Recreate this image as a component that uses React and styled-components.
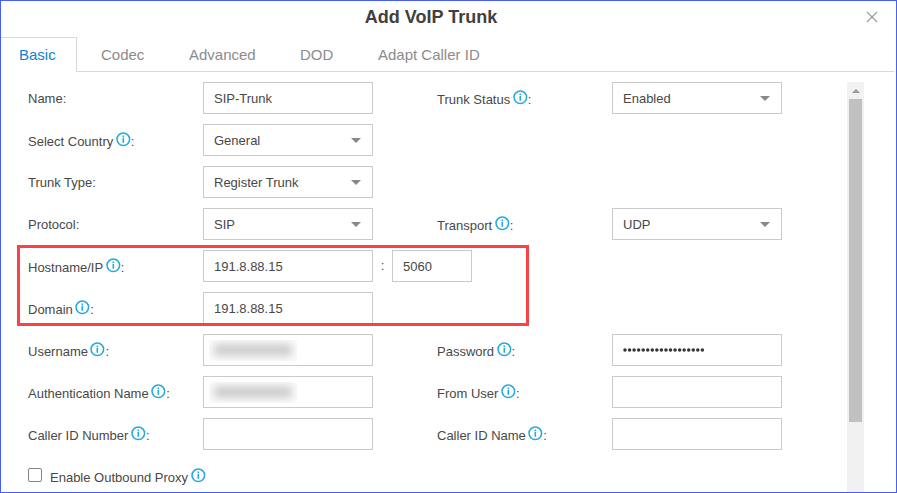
import React from "react";
import styled, { createGlobalStyle } from "styled-components";

const GlobalStyle = createGlobalStyle`
  * { box-sizing: border-box; }
  body { margin: 0; background: #fff; overflow: hidden; }
`;

const Dialog = styled.div`
  width: 897px;
  height: 493px;
  border: 1px solid #465ff5;
  background: #fff;
  display: flex;
  flex-direction: column;
  overflow: hidden;
  font-family: "Liberation Sans", Arial, sans-serif;
  font-size: 13px;
  color: #484848;
`;

const Header = styled.header`
  flex: none;
  height: 36px;
  display: grid;
  grid-template-columns: 60px 1fr 60px;
  padding-right: 35px;
`;

const Title = styled.h1`
  margin: 0;
  grid-column: 2;
  text-align: center;
  font-size: 18px;
  line-height: 32px;
  color: #404040;
`;

const CloseButton = styled.button`
  width: 12px;
  height: 12px;
  margin: 10px -17px 0 0;
  justify-self: end;
  padding: 0;
  border: 0;
  background: none;
  display: flex;
`;

const Tabs = styled.nav`
  flex: none;
  height: 35px;
  width: 893px;
  display: flex;
`;

const Tab = styled.div`
  width: ${(p) => p.$width}px;
  flex: ${(p) => (p.$last ? "1" : "none")};
  padding-left: ${(p) => p.$pad}px;
  font-size: 15px;
  line-height: 34px;
  color: ${(p) => (p.$active ? "#0d82cf" : "#8c8c8c")};
  border-style: solid;
  border-color: #d9d9d9;
  border-width: ${(p) => (p.$active ? "1px 1px 0 0" : "0 0 1px 0")};
  padding-top: ${(p) => (p.$active ? 0 : 1)}px;
`;

const Body = styled.div`
  flex: 1;
  min-height: 0;
  display: flex;
  justify-content: space-between;
  padding: 10px 32px 0 27px;
`;

const Form = styled.form`
  position: relative;
  display: flex;
  flex-direction: column;
  gap: 10px;
`;

const Row = styled.div`
  display: grid;
  grid-template-columns: 175px 234px 175px 170px;
  height: 32px;
  flex: none;
`;

const Label = styled.label`
  display: flex;
  line-height: 16px;
  padding-top: ${(p) => (p.$info ? 10 : 9)}px;
  white-space: pre;
`;

const InfoSvg = styled.svg`
  flex: none;
  width: 15px;
  height: 15px;
  margin: -2px 0 0 2.5px;
`;

const FieldGroup = styled.div`
  display: flex;
`;

const Field = styled.div`
  flex: none;
  width: ${(p) => p.$width ?? 170}px;
  height: 32px;
  border: 1px solid #cbcbcb;
  padding: 0 11px 0 10px;
  display: flex;
  align-items: center;
  justify-content: space-between;
  white-space: nowrap;
`;

const Value = styled.span`
  line-height: 16px;
  padding-top: 2px;
`;

const Caret = styled.span`
  border: 5px solid transparent;
  border-top-color: #888;
  border-bottom: 0;
`;

const Separator = styled.span`
  flex: none;
  width: 19px;
  text-align: center;
  line-height: 32px;
`;

const Redacted = styled.span`
  width: 88px;
  height: 21px;
  margin-left: -5px;
  background: #fcfcfc;
  display: flex;
  align-items: center;
  justify-content: center;
  overflow: hidden;

  &::before {
    content: "";
    width: 78px;
    height: 12px;
    background: #cbcbcb;
    filter: blur(4.5px);
  }
`;

const DotsSvg = styled.svg`
  width: 82px;
  height: 4px;
`;

const Highlight = styled.div`
  position: absolute;
  left: -11px;
  top: 163px;
  width: 512px;
  height: 81px;
  border: 3px solid #fa4145;
  pointer-events: none;
`;

const CheckRow = styled.label`
  display: flex;
  flex: none;
  height: 26px;
  line-height: 16px;
  padding-top: 10px;
`;

const Checkbox = styled.span`
  width: 14px;
  height: 14px;
  margin: -2px 8px 0 0;
  border: 1px solid #858585;
  border-radius: 2px;
`;

const ScrollTrack = styled.div`
  width: 17px;
  background: #f1f1f1;
  display: flex;
  flex-direction: column;
  align-items: center;
`;

const ScrollArrow = styled.span`
  margin: 7px 0 6px;
  border: 4px solid transparent;
  border-bottom-color: #999;
  border-top: 0;
`;

const ScrollThumb = styled.div`
  width: 13px;
  height: 323px;
  background: #c1c1c1;
`;

const Info = () => (
  <InfoSvg viewBox="0 0 15 15">
    <circle cx="7.3" cy="7.3" r="6.3" fill="none" stroke="#25a9da" strokeWidth="1.5" />
    <path d="M7.3 3.6v1.4M7.3 5.8v5" stroke="#25a9da" strokeWidth="1.6" />
  </InfoSvg>
);

const Control = ({ type, value }) => (
  <Field>
    {type === "redacted" && <Redacted />}
    {type === "password" && (
      <DotsSvg viewBox="0 0 82 4">
        {Array.from({ length: 18 }, (_, i) => (
          <circle key={i} cx={2 + i * 4.55} cy="2" r="1.75" fill="#333" />
        ))}
      </DotsSvg>
    )}
    {value && <Value>{value}</Value>}
    {type === "select" && <Caret />}
  </Field>
);

const FieldLabel = ({ text, info }) => (
  <Label $info={info}>
    {text}
    {info && <Info />}:
  </Label>
);

const rows = [
  [{ text: "Name", value: "SIP-Trunk" }, { text: "Trunk Status", info: true, type: "select", value: "Enabled" }],
  [{ text: "Select Country", info: true, type: "select", value: "General" }],
  [{ text: "Trunk Type", type: "select", value: "Register Trunk" }],
  [{ text: "Protocol", type: "select", value: "SIP" }, { text: "Transport", info: true, type: "select", value: "UDP" }],
  [{ text: "Hostname/IP", info: true, value: "191.8.88.15", port: "5060" }],
  [{ text: "Domain", info: true, value: "191.8.88.15" }],
  [{ text: "Username", info: true, type: "redacted" }, { text: "Password", info: true, type: "password" }],
  [{ text: "Authentication Name", info: true, type: "redacted" }, { text: "From User", info: true }],
  [{ text: "Caller ID Number", info: true }, { text: "Caller ID Name", info: true }],
];

const tabs = [
  { text: "Basic", width: 76, pad: 18, active: true },
  { text: "Codec", width: 88, pad: 24 },
  { text: "Advanced", width: 111, pad: 24 },
  { text: "DOD", width: 78, pad: 24 },
  { text: "Adapt Caller ID", width: 540, pad: 24, last: true },
];

export default function App() {
  return (
    <>
      <GlobalStyle />
      <Dialog>
        <Header>
          <Title>Add VoIP Trunk</Title>
          <CloseButton aria-label="Close">
            <svg width="12" height="12" viewBox="0 0 12 12">
              <path d="M1 1L11 11M11 1L1 11" stroke="#999" strokeWidth="1.1" />
            </svg>
          </CloseButton>
        </Header>
        <Tabs>
          {tabs.map((t) => (
            <Tab key={t.text} $width={t.width} $pad={t.pad} $active={t.active} $last={t.last}>
              {t.text}
            </Tab>
          ))}
        </Tabs>
        <Body>
          <Form>
            {rows.map((row) => (
              <Row key={row[0].text}>
                {row.map((f) => (
                  <React.Fragment key={f.text}>
                    <FieldLabel text={f.text} info={f.info} />
                    <FieldGroup>
                      <Control type={f.type} value={f.value} />
                      {f.port && (
                        <>
                          <Separator>:</Separator>
                          <Field $width={80}>
                            <Value>{f.port}</Value>
                          </Field>
                        </>
                      )}
                    </FieldGroup>
                  </React.Fragment>
                ))}
              </Row>
            ))}
            <CheckRow>
              <Checkbox />
              Enable Outbound Proxy
              <Info />
            </CheckRow>
            <Highlight />
          </Form>
          <ScrollTrack>
            <ScrollArrow />
            <ScrollThumb />
          </ScrollTrack>
        </Body>
      </Dialog>
    </>
  );
}
